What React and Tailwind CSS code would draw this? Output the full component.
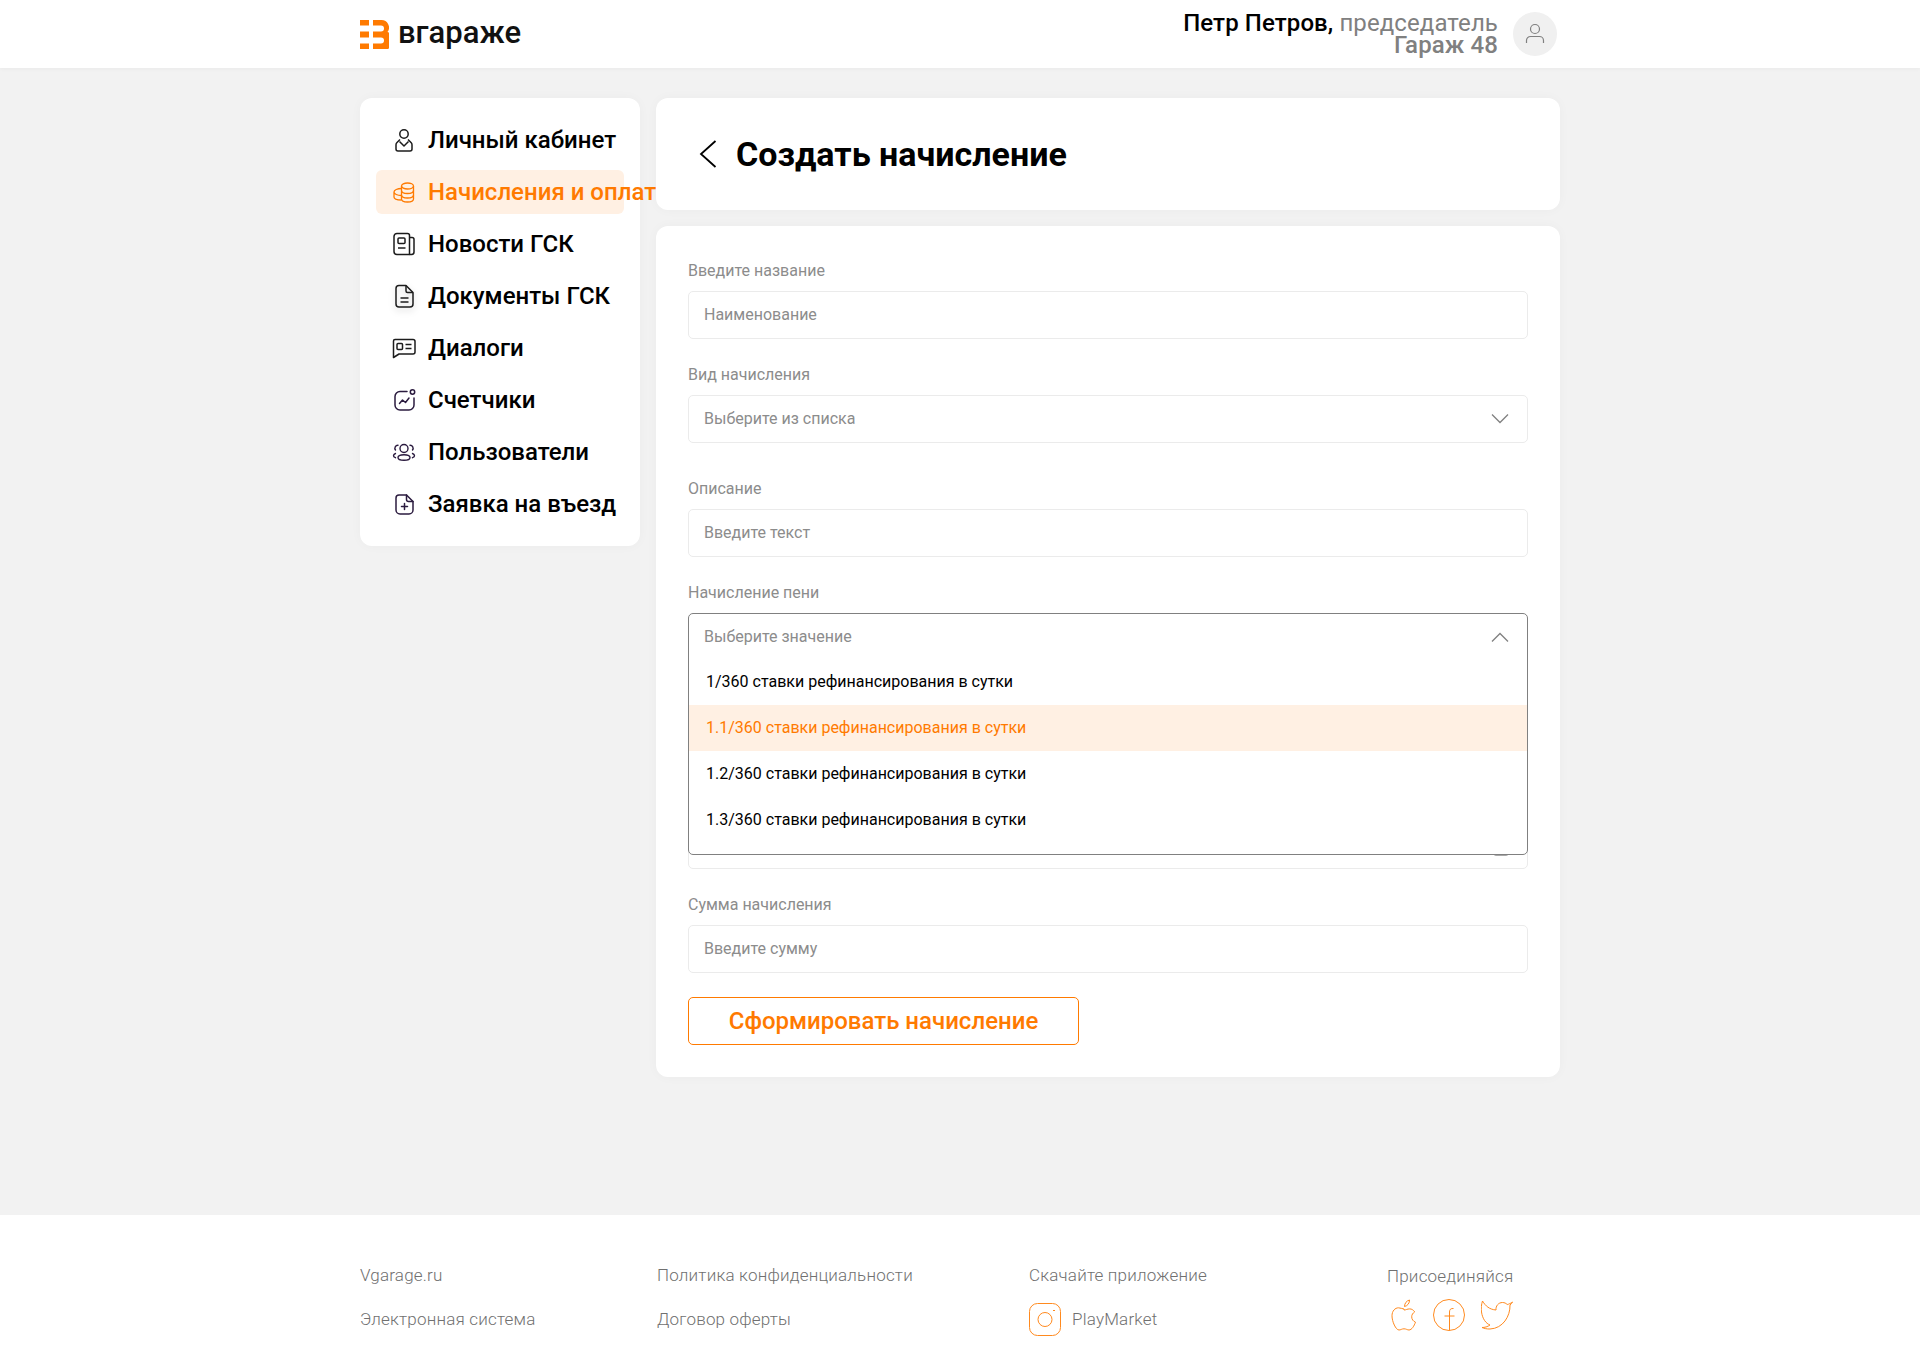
import React from "react";

const IconPerson = () => (
  <svg width="24" height="24" viewBox="0 0 24 24" fill="none" stroke="currentColor" strokeWidth="1.5" strokeLinejoin="round">
    <circle cx="12" cy="6" r="4.2" />
    <path d="M8 11.5 5 14.5c-.7.7-1 1.4-1 2.3V21a2 2 0 0 0 2 2h12a2 2 0 0 0 2-2v-4.2c0-.9-.3-1.6-1-2.3l-3-3" />
    <path d="M7.5 13.5 12 18l4.500-4.500" />
  </svg>
);

const IconCoins = () => (
  <svg width="24" height="24" viewBox="0 0 24 24" fill="none" stroke="currentColor" strokeWidth="1.300">
    <ellipse cx="15.500" cy="6" rx="6" ry="3" />
    <path d="M9.500 6v13c0 1.700 2.700 3 6 3s6-1.300 6-3V6" />
    <path d="M9.500 10.500c0 1.700 2.700 3 6 3s6-1.300 6-3M9.500 15c0 1.700 2.700 3 6 3s6-1.300 6-3" />
    <path d="M9.500 8.500C5.400 8.500 2 10 2 12s3.400 3.500 7.500 3.500M2 12v5c0 1.800 3.400 3 7.500 3" />
  </svg>
);

const IconNews = () => (
  <svg width="24" height="24" viewBox="0 0 24 24" fill="none" stroke="currentColor" strokeWidth="1.500" strokeLinejoin="round">
    <path d="M5 1.500h10.500a2 2 0 0 1 2 2V22.500H5a3 3 0 0 1-3-3v-15a3 3 0 0 1 3-3Z" />
    <path d="M17.500 5.500H20a2 2 0 0 1 2 2V20a2.500 2.500 0 0 1-2.500 2.500h-2" />
    <rect x="6" y="6" width="7" height="5.500" rx="1" />
    <path d="M6 16h7.500" />
  </svg>
);

const IconDoc = () => (
  <svg width="24" height="24" viewBox="0 0 24 24" fill="none" stroke="currentColor" strokeWidth="1.500" strokeLinejoin="round" className="drop-shadow-[0_3px_3px_rgba(0,0,0,0.18)]">
    <path d="M7 1.500h7l7 7V20a3 3 0 0 1-3 3H7a3 3 0 0 1-3-3V4.500a3 3 0 0 1 3-3Z" />
    <path d="M14 1.500V7a1.500 1.500 0 0 0 1.500 1.500H21" />
    <path d="M8.500 14h8M8.500 18h8" />
  </svg>
);

const IconChat = () => (
  <svg width="24" height="24" viewBox="0 0 24 24" fill="none" stroke="currentColor" strokeWidth="1.500" strokeLinejoin="round">
    <path d="M3 3.500h18a2 2 0 0 1 2 2V16a2 2 0 0 1-2 2H7l-5.500 3.500V5a1.500 1.500 0 0 1 1.500-1.500Z" />
    <rect x="5" y="7.500" width="5.500" height="6" rx="1" />
    <path d="M13.500 8.500h6M13.500 12.500h6" />
  </svg>
);

const IconChart = () => (
  <svg width="24" height="24" viewBox="0 0 24 24" fill="none" stroke="#2b1b3f" strokeWidth="1.500" strokeLinecap="round" strokeLinejoin="round">
    <path d="M15 3.500H8a5 5 0 0 0-5 5V17a5 5 0 0 0 5 5h9a5 5 0 0 0 5-5V10" />
    <circle cx="20.500" cy="4" r="2.200" />
    <path d="m7.500 15.500 3-3.500 3 2.500 3.500-4.500" />
  </svg>
);

const IconUsers = () => (
  <svg width="24" height="24" viewBox="0 0 24 24" fill="none" stroke="#2b1b3f" strokeWidth="1.400" strokeLinecap="round">
    <circle cx="12" cy="8.500" r="4" />
    <ellipse cx="12" cy="17.500" rx="6" ry="2.800" />
    <path d="M6 5.200A3 3 0 0 0 3.500 10M18 5.200A3 3 0 0 1 20.500 10M3.500 13.500C2.200 14 1.500 14.800 1.500 15.700c0 .9.800 1.600 2 2M20.500 13.500c1.300.5 2 1.300 2 2.200 0 .9-.8 1.600-2 2" />
  </svg>
);

const IconPlusDoc = () => (
  <svg width="24" height="24" viewBox="0 0 24 24" fill="none" stroke="#2b1b3f" strokeWidth="1.500" strokeLinecap="round" strokeLinejoin="round">
    <path d="M7 3h7.500L21 9.500V18a4 4 0 0 1-4 4H8a4 4 0 0 1-4-4V6a3 3 0 0 1 3-3Z" />
    <path d="M14.500 3v4.500a2 2 0 0 0 2 2H21" />
    <path d="M12.500 11.500v6M9.500 14.500h6" />
  </svg>
);

const Chevron = ({ up }) => (
  <svg width="18" height="10" viewBox="0 0 18 10" fill="none" stroke="#808080" strokeWidth="1.300">
    <path d={up ? "M1 9.500 9 1.500l8 8" : "M1 .5l8 8 8-8"} />
  </svg>
);

const IconCalendar = () => (
  <svg width="16" height="22" viewBox="0 0 16 22" fill="none" stroke="#8c8c8c" strokeWidth="1.500">
    <rect x="1" y="3" width="14" height="18" rx="2" />
  </svg>
);

const Logo = () => (
  <svg width="29" height="29" viewBox="0 0 29 29" fill="#ff7a00">
    <rect x="0" y="0" width="9" height="5.500" />
    <rect x="0" y="11.500" width="9" height="6" />
    <rect x="0" y="23.500" width="9" height="5.500" />
    <path d="M13 0h8.500a7.500 7.500 0 0 1 6 12 8.500 8.500 0 0 1-6 17H13v-5.500h8a3 3 0 0 0 0-6h-8v-6h8a2.800 2.800 0 0 0 0-6h-8Z" />
  </svg>
);

const IconInstagram = () => (
  <svg width="32" height="33" viewBox="0 0 32 33" fill="none" stroke="#ff8a1f" strokeWidth="1">
    <rect x="0.500" y="0.500" width="31" height="32" rx="8" />
    <circle cx="16" cy="16.500" r="7" />
    <path d="M24 7.500h2" />
  </svg>
);

const IconApple = () => (
  <svg width="26" height="32" viewBox="0 0 26 32" fill="none" stroke="#ff8a1f" strokeWidth="1">
    <path d="M13 10c-2-.1-3.200-1.200-5.500-1.200C4 8.800 1 12 1 16.800 1 22.500 4.800 31 8 31c1.700 0 2.700-1.200 5-1.200s3.200 1.200 5 1.200c2.800 0 5.200-4.300 6.500-7.800-2.300-1-3.800-2.800-3.800-5.400 0-2.100 1.100-3.700 3-4.900-1.400-2-3-3-5-3-2.500 0-3.700 1.100-5.700 1.100Z" />
    <path d="M13.500 7.500c0-3 2-5.800 5-6.500.2 3-2 6-5 6.500Z" />
  </svg>
);

const IconFacebook = () => (
  <svg width="32" height="32" viewBox="0 0 32 32" fill="none" stroke="#ff8a1f" strokeWidth="1">
    <circle cx="16" cy="16" r="15.500" />
    <path d="M16.500 31.500V13c0-2.500 1.300-3.800 4-3.500M11.500 17h10" />
  </svg>
);

const IconTwitter = () => (
  <svg width="32" height="30" viewBox="0 0 32 30" fill="none" stroke="#ff8a1f" strokeWidth="1" strokeLinejoin="round">
    <path d="M31.500 2c-.6 1.300-1.300 2-2.500 3 .4 11-7 23.500-20 24-3 .1-5.800-.5-8-1.500 2.500.1 5.800-.8 8-2.500-4-1.500-7.500-6-8.500-13-.5-3.500-.2-7.500 1-11C4.500 6 8.500 9.500 15 10c-.4-4 2.400-7.500 6.500-7.500 2 0 3.500.8 4.700 2 1.800-.3 3.600-1.200 5.300-2.500Z" />
  </svg>
);

const navItems = [
  { label: "Личный кабинет", Icon: IconPerson },
  { label: "Начисления и оплаты", Icon: IconCoins, active: true },
  { label: "Новости ГСК", Icon: IconNews },
  { label: "Документы ГСК", Icon: IconDoc },
  { label: "Диалоги", Icon: IconChat },
  { label: "Счетчики", Icon: IconChart },
  { label: "Пользователи", Icon: IconUsers },
  { label: "Заявка на въезд", Icon: IconPlusDoc },
];

const options = [
  "1/360 ставки рефинансирования в сутки",
  "1.1/360 ставки рефинансирования в сутки",
  "1.2/360 ставки рефинансирования в сутки",
  "1.3/360 ставки рефинансирования в сутки",
];

const Field = ({ label, children, className = "" }) => (
  <div className={`flex flex-col gap-2 ${className}`}>
    <div className="h-6 text-base leading-6 text-[#8c8c8c]">{label}</div>
    {children}
  </div>
);

const Input = ({ placeholder, icon }) => (
  <div className="flex h-12 items-center justify-between rounded-[5px] border border-[#ebebeb] bg-white pl-[15px] pr-[18px] text-base text-[#8c8c8c]">
    <span>{placeholder}</span>
    {icon}
  </div>
);

const Sidebar = () => (
  <aside className="flex w-[280px] flex-col gap-2 self-start rounded-xl bg-white p-4 py-5 shadow-[0_0_12px_rgba(0,0,0,0.03)]">
    {navItems.map(({ label, Icon, active }) => (
      <div
        key={label}
        className={`flex h-11 items-center gap-3 whitespace-nowrap rounded-md pl-4 text-2xl font-medium ${active ? "bg-[#fff0e3] text-[#ff7a00]" : "text-black"}`}
      >
        <span className={active ? "text-[#ff7a00]" : "text-[#1c1c1c]"}>
          <Icon />
        </span>
        {label}
      </div>
    ))}
  </aside>
);

const PenaltySelect = () => (
  <div className="relative h-12">
    <div className="absolute inset-x-0 top-0 z-10 flex flex-col rounded-[5px] border border-[#808080] bg-white pb-[11px]">
      <div className="flex h-[45px] items-center justify-between pl-[15px] pr-[18px] text-base text-[#8c8c8c]">
        <span>Выберите значение</span>
        <Chevron up />
      </div>
      {options.map((option, i) => (
        <div
          key={option}
          className={`flex h-[46px] items-center pl-[17px] text-base ${i === 1 ? "bg-[#fff0e3] text-[#ff7a00]" : "text-black"}`}
        >
          {option}
        </div>
      ))}
    </div>
  </div>
);

const FooterCol = ({ className = "", children }) => (
  <div className={`flex flex-col gap-5 text-[17px] font-light leading-6 tracking-[0.2px] text-[#707070] ${className}`}>{children}</div>
);

export default function App() {
  return (
    <div className="flex min-h-screen flex-col bg-[#f2f2f2] font-['Roboto',sans-serif]">
      <header className="h-[68px] bg-white shadow-[0_1px_4px_rgba(0,0,0,0.04)]">
        <div className="mx-auto flex h-full w-[1200px] items-center justify-between pr-[3px]">
          <div className="flex items-center gap-[9px]">
            <Logo />
            <span className="pb-[2px] text-[31px] font-medium text-[#111]">вгараже</span>
          </div>
          <div className="flex items-center gap-[15px]">
            <div className="text-right text-2xl leading-[22px] tracking-[0.1px] text-[#808080]">
              <div>
                <span className="font-medium text-black">Петр Петров, </span>
                председатель
              </div>
              <div className="font-medium">Гараж 48</div>
            </div>
            <div className="flex h-11 w-11 items-center justify-center rounded-full bg-[#f0f0f0]">
              <svg width="24" height="24" viewBox="0 0 24 24" fill="none" stroke="#808080" strokeWidth="1.200">
                <circle cx="12" cy="7" r="4.500" />
                <path d="M3.500 21v-2.500a4 4 0 0 1 4-4h9a4 4 0 0 1 4 4V21" />
              </svg>
            </div>
          </div>
        </div>
      </header>

      <main className="mx-auto flex w-[1200px] flex-1 gap-4 pt-[30px]">
        <Sidebar />
        <div className="relative flex w-[904px] flex-col gap-4 self-start">
          <div className="flex h-28 items-center gap-[19px] rounded-xl bg-white pl-[43px] shadow-[0_0_12px_rgba(0,0,0,0.03)]">
            <svg width="18" height="28" viewBox="0 0 18 28" fill="none" stroke="#000" strokeWidth="1.800">
              <path d="M16.500 1 2 14l14.500 13" />
            </svg>
            <h1 className="text-[34px] font-bold text-black">Создать начисление</h1>
          </div>
          <div className="flex flex-col gap-6 rounded-xl bg-white p-8 pt-[33px] shadow-[0_0_12px_rgba(0,0,0,0.03)]">
            <Field label="Введите название">
              <Input placeholder="Наименование" />
            </Field>
            <Field label="Вид начисления" className="mb-[10px]">
              <Input placeholder="Выберите из списка" icon={<Chevron />} />
            </Field>
            <Field label="Описание">
              <Input placeholder="Введите текст" />
            </Field>
            <Field label="Начисление пени">
              <PenaltySelect />
            </Field>
            <Field label="">
              <Input placeholder="" />
            </Field>
            <Field label="">
              <Input placeholder="" icon={<IconCalendar />} />
            </Field>
            <Field label="Сумма начисления">
              <Input placeholder="Введите сумму" />
            </Field>
            <button className="h-12 w-[391px] rounded-[5px] border border-[#ff7a00] bg-white text-2xl font-medium text-[#ff7a00]">
              Сформировать начисление
            </button>
          </div>
        </div>
      </main>

      <footer className="h-[156px] bg-white pt-12">
        <div className="mx-auto flex w-[1200px]">
          <FooterCol className="w-[297px]">
            <div>Vgarage.ru</div>
            <div>Электронная система</div>
          </FooterCol>
          <FooterCol className="w-[372px]">
            <div>Политика конфиденциальности</div>
            <div>Договор оферты</div>
          </FooterCol>
          <FooterCol className="w-[358px]">
            <div>Скачайте приложение</div>
            <div className="flex h-6 items-center gap-[11px]">
              <IconInstagram />
              PlayMarket
            </div>
          </FooterCol>
          <div className="flex flex-col gap-[11px] text-[17px] font-light leading-6 tracking-[0.2px] text-[#707070]">
            <div className="pt-px">Присоединяйся</div>
            <div className="flex items-center gap-4 pl-1">
              <IconApple />
              <IconFacebook />
              <IconTwitter />
            </div>
          </div>
        </div>
      </footer>
    </div>
  );
}
